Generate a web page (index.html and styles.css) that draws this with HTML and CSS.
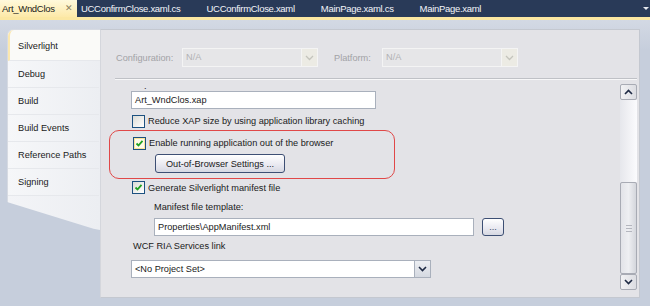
FILE: index.html
```html
<!DOCTYPE html>
<html lang="en">
<head>
    <meta charset="UTF-8">
    <title>Art_WndClos - Properties</title>
    <link rel="stylesheet" href="styles.css">
</head>
<body>
    <div class="tabbar">
        <div class="doc-tab active">Art_WndClos <span class="close">✕</span></div>
        <div class="doc-tab">UCConfirmClose.xaml.cs</div>
        <div class="doc-tab">UCConfirmClose.xaml</div>
        <div class="doc-tab">MainPage.xaml.cs</div>
        <div class="doc-tab">MainPage.xaml</div>
        <div class="tab-menu"></div>
    </div>
    <div class="tab-strip"></div>

    <div class="workspace">
        <div class="nav">
            <div class="nav-list">
                <div class="nav-item selected">Silverlight</div>
                <div class="nav-item">Debug</div>
                <div class="nav-item">Build</div>
                <div class="nav-item">Build Events</div>
                <div class="nav-item">Reference Paths</div>
                <div class="nav-item">Signing</div>
            </div>
            <div class="nav-tail"></div>
        </div>

        <div class="panel">
            <div class="config-row">
                <span class="config-label">Configuration:</span>
                <div class="combo disabled config-combo">
                    <span class="combo-text">N/A</span>
                    <span class="combo-btn"><svg width="9" height="6" viewBox="0 0 9 6"><path d="M1 1 L4.5 4.5 L8 1" fill="none" stroke="#c4c4bc" stroke-width="1.3"/></svg></span>
                </div>
                <span class="config-label platform">Platform:</span>
                <div class="combo disabled config-combo">
                    <span class="combo-text">N/A</span>
                    <span class="combo-btn"><svg width="9" height="6" viewBox="0 0 9 6"><path d="M1 1 L4.5 4.5 L8 1" fill="none" stroke="#c4c4bc" stroke-width="1.3"/></svg></span>
                </div>
            </div>
            <div class="separator"></div>

            <div class="body">
                <div class="form">
                    <div class="dot-label">.</div>
                    <div class="textbox xap">Art_WndClos.xap</div>

                    <label class="check-row">
                        <span class="checkbox"></span>
                        Reduce XAP size by using application library caching
                    </label>

                    <div class="highlight">
                        <label class="check-row">
                            <span class="checkbox checked hot"><svg width="9" height="9" viewBox="0 0 9 9"><path d="M1.5 4.5 L3.5 6.5 L7.5 1.8" fill="none" stroke="#21a121" stroke-width="1.8"/></svg></span>
                            Enable running application out of the browser
                        </label>
                        <button class="btn oob">Out-of-Browser Settings ...</button>
                    </div>

                    <label class="check-row generate">
                        <span class="checkbox checked"><svg width="9" height="9" viewBox="0 0 9 9"><path d="M1.5 4.5 L3.5 6.5 L7.5 1.8" fill="none" stroke="#21a121" stroke-width="1.8"/></svg></span>
                        Generate Silverlight manifest file
                    </label>

                    <div class="indent">
                        <div class="field-label">Manifest file template:</div>
                        <div class="browse-row">
                            <div class="textbox manifest">Properties\AppManifest.xml</div>
                            <button class="btn browse">...</button>
                        </div>
                    </div>

                    <div class="field-label ria">WCF RIA Services link</div>
                    <div class="combo ria-combo">
                        <span class="combo-text">&lt;No Project Set&gt;</span>
                        <span class="combo-btn"><svg width="9" height="6" viewBox="0 0 9 6"><path d="M1 1 L4.5 4.5 L8 1" fill="none" stroke="#1e2a44" stroke-width="1.6"/></svg></span>
                    </div>
                </div>

                <div class="scrollbar">
                    <div class="sb-btn"><svg width="9" height="6" viewBox="0 0 9 6"><path d="M1 5 L4.5 1.5 L8 5" fill="none" stroke="#1e2a44" stroke-width="1.6"/></svg></div>
                    <div class="sb-track"></div>
                    <div class="sb-thumb"><span class="grip"></span></div>
                    <div class="sb-btn"><svg width="9" height="6" viewBox="0 0 9 6"><path d="M1 1 L4.5 4.5 L8 1" fill="none" stroke="#1e2a44" stroke-width="1.6"/></svg></div>
                </div>
            </div>
        </div>
    </div>
</body>
</html>
```

FILE: styles.css
```css
* {
    margin: 0;
    padding: 0;
    box-sizing: border-box;
}

body {
    width: 650px;
    height: 306px;
    overflow: hidden;
    background: #c6cedc;
    font-family: 'Liberation Sans', Arial, sans-serif;
    font-size: 9.2px;
    color: #1a1a1a;
}

/* Document tabs */
.tabbar {
    height: 17px;
    background: #293a58;
    display: flex;
    align-items: stretch;
    font-size: 9.5px;
    letter-spacing: -0.3px;
}

.doc-tab {
    color: #f2f4f8;
    padding: 0 3px;
    line-height: 17px;
    margin-right: 20px;
    white-space: nowrap;
}

.doc-tab.active {
    background: linear-gradient(#fff9dc, #fde9a8);
    color: #1a1a1a;
    width: 77px;
    margin-right: 1px;
    padding: 0 4px 0 2px;
    display: flex;
    justify-content: space-between;
}

.close {
    color: #8a8060;
    font-size: 9px;
}

.tab-menu {
    margin-left: auto;
    margin-right: 1px;
    align-self: center;
    border-left: 3px solid transparent;
    border-right: 3px solid transparent;
    border-top: 3px solid #e6e9ef;
}

.tab-strip {
    height: 3px;
    background: #fbe7a2;
}

/* Page area */
.workspace {
    display: flex;
    height: 282px;
    padding: 9px 10px 4px 7px;
    background: linear-gradient(#d3d9e4, #c6cedc 30px);
}

.nav {
    width: 93px;
    display: flex;
    flex-direction: column;
}

.nav-list {
    background: linear-gradient(90deg, #f6f7f9, #eceef2);
    border-top: 1px solid #d6dae2;
    border-left: 1px solid #d6dae2;
    border-top-left-radius: 6px;
}

.nav-item {
    height: 27px;
    line-height: 27px;
    padding-left: 10px;
    border-bottom: 1px solid #e6e8ec;
    margin-right: 1px;
}

.nav-item.selected {
    height: 31px;
    line-height: 33px;
    background: #fafaf8;
    margin-right: -1px;
    border-top-left-radius: 6px;
    border-left: 2px solid #fbe8b0;
    padding-left: 8px;
}

.nav-tail {
    height: 34px;
    background: linear-gradient(90deg, #f3f4f7, #eceef2);
    clip-path: polygon(0 0, 100% 0, 100% 100%, 93% 96%, 0 6px);
    border-left: 1px solid #d6dae2;
}

.panel {
    flex: 1;
    background: #e3e3e7;
    border: 1px solid #c4c8d0;
    border-left: 1px solid #d4d6dc;
    display: flex;
    flex-direction: column;
}

.config-row {
    display: flex;
    align-items: center;
    padding: 18px 0 0 15px;
}

.config-label {
    color: #a2a2a6;
    width: 66px;
}

.config-label.platform {
    width: 48px;
    margin-left: 16px;
}

.combo {
    display: flex;
    align-items: stretch;
    height: 18px;
    background: #fff;
    border: 1px solid #a9b0bc;
}

.combo-text {
    flex: 1;
    padding-left: 3px;
    line-height: 16px;
    white-space: nowrap;
}

.combo-btn {
    width: 16px;
    display: flex;
    align-items: center;
    justify-content: center;
    background: linear-gradient(#eceef2, #d5d9e1);
    border-left: 1px solid #a9b0bc;
}

.combo.disabled {
    background: #e6e6e8;
    border-color: #f4f4f4;
    color: #b2b2b4;
}

.combo.disabled .combo-btn {
    background: #ecebe4;
    border-left-color: #f4f4f4;
}

.config-combo {
    width: 136px;
    height: 19px;
}

.separator {
    height: 2px;
    margin: 11px 2px 0 14px;
    border-top: 1px solid #bfc1c6;
    border-bottom: 1px solid #f7f7f8;
}

.body {
    flex: 1;
    display: flex;
    padding: 3px 2px 7px 0;
}

.form {
    flex: 1;
    padding-left: 30px;
}

.dot-label {
    height: 8px;
    line-height: 6px;
    padding-left: 13px;
}

.textbox {
    height: 18px;
    line-height: 16px;
    background: #fff;
    border: 1px solid #a9b0bc;
    padding-left: 3px;
    white-space: nowrap;
}

.textbox.xap {
    width: 245px;
}

.check-row {
    display: flex;
    align-items: center;
    gap: 3px;
    height: 18px;
    margin-left: 1px;
}

.form > .check-row:first-of-type {
    margin-top: 3px;
}

.checkbox {
    width: 13px;
    height: 13px;
    border: 1px solid #1c5180;
    background: linear-gradient(135deg, #dcdcd6, #fff);
    display: flex;
    align-items: center;
    justify-content: center;
}

.checkbox.hot {
    background: #f8d980;
    box-shadow: inset 0 0 0 1px #fbe49a;
}

.checkbox.hot svg {
    background: #fffbe8;
}

.highlight {
    border: 1px solid #e04848;
    border-radius: 10px;
    margin: 0 0 0 -22px;
    width: 286px;
    padding: 3px 0 5px 22px;
}

.btn {
    font-family: inherit;
    font-size: 9.2px;
    color: #1a1a1a;
    background: linear-gradient(#ffffff, #e8e8f0 60%, #d6d8e2);
    border: 1px solid #3d4f74;
    border-radius: 3px;
    cursor: pointer;
}

.btn.oob {
    width: 130px;
    height: 19px;
    margin: 2px 0 0 23px;
}

.check-row.generate {
    height: 17px;
}

.indent {
    padding-left: 23px;
}

.field-label {
    height: 22px;
    line-height: 22px;
}

.browse-row {
    display: flex;
    align-items: center;
    gap: 8px;
}

.textbox.manifest {
    width: 320px;
}

.btn.browse {
    width: 22px;
    height: 18px;
    line-height: 10px;
    color: #3a4a6a;
}

.field-label.ria {
    height: 20px;
    line-height: 20px;
    padding-left: 2px;
}

.ria-combo {
    width: 300px;
    margin-top: 4px;
}

/* Vertical scrollbar */
.scrollbar {
    width: 17px;
    display: flex;
    flex-direction: column;
    padding-top: 1px;
}

.sb-btn {
    height: 16px;
    display: flex;
    align-items: center;
    justify-content: center;
    background: linear-gradient(90deg, #f2f2f4, #dcdde2);
    border: 1px solid #a8abb4;
    border-radius: 2px;
}

.sb-track {
    height: 82px;
    background: linear-gradient(90deg, #e6e7ec, #fbfbfd);
}

.sb-thumb {
    flex: 1;
    display: flex;
    align-items: center;
    justify-content: center;
    background: linear-gradient(90deg, #e2e3e8, #eeeff2 50%, #d4d6dc);
    border: 1px solid #a8abb4;
    border-radius: 2px;
}

.grip {
    width: 6px;
    height: 7px;
    border-top: 1px solid #b4b6be;
    border-bottom: 1px solid #b4b6be;
    background: linear-gradient(#fff0 2px, #b4b6be 2px, #b4b6be 3px, #fff0 3px);
}
```
